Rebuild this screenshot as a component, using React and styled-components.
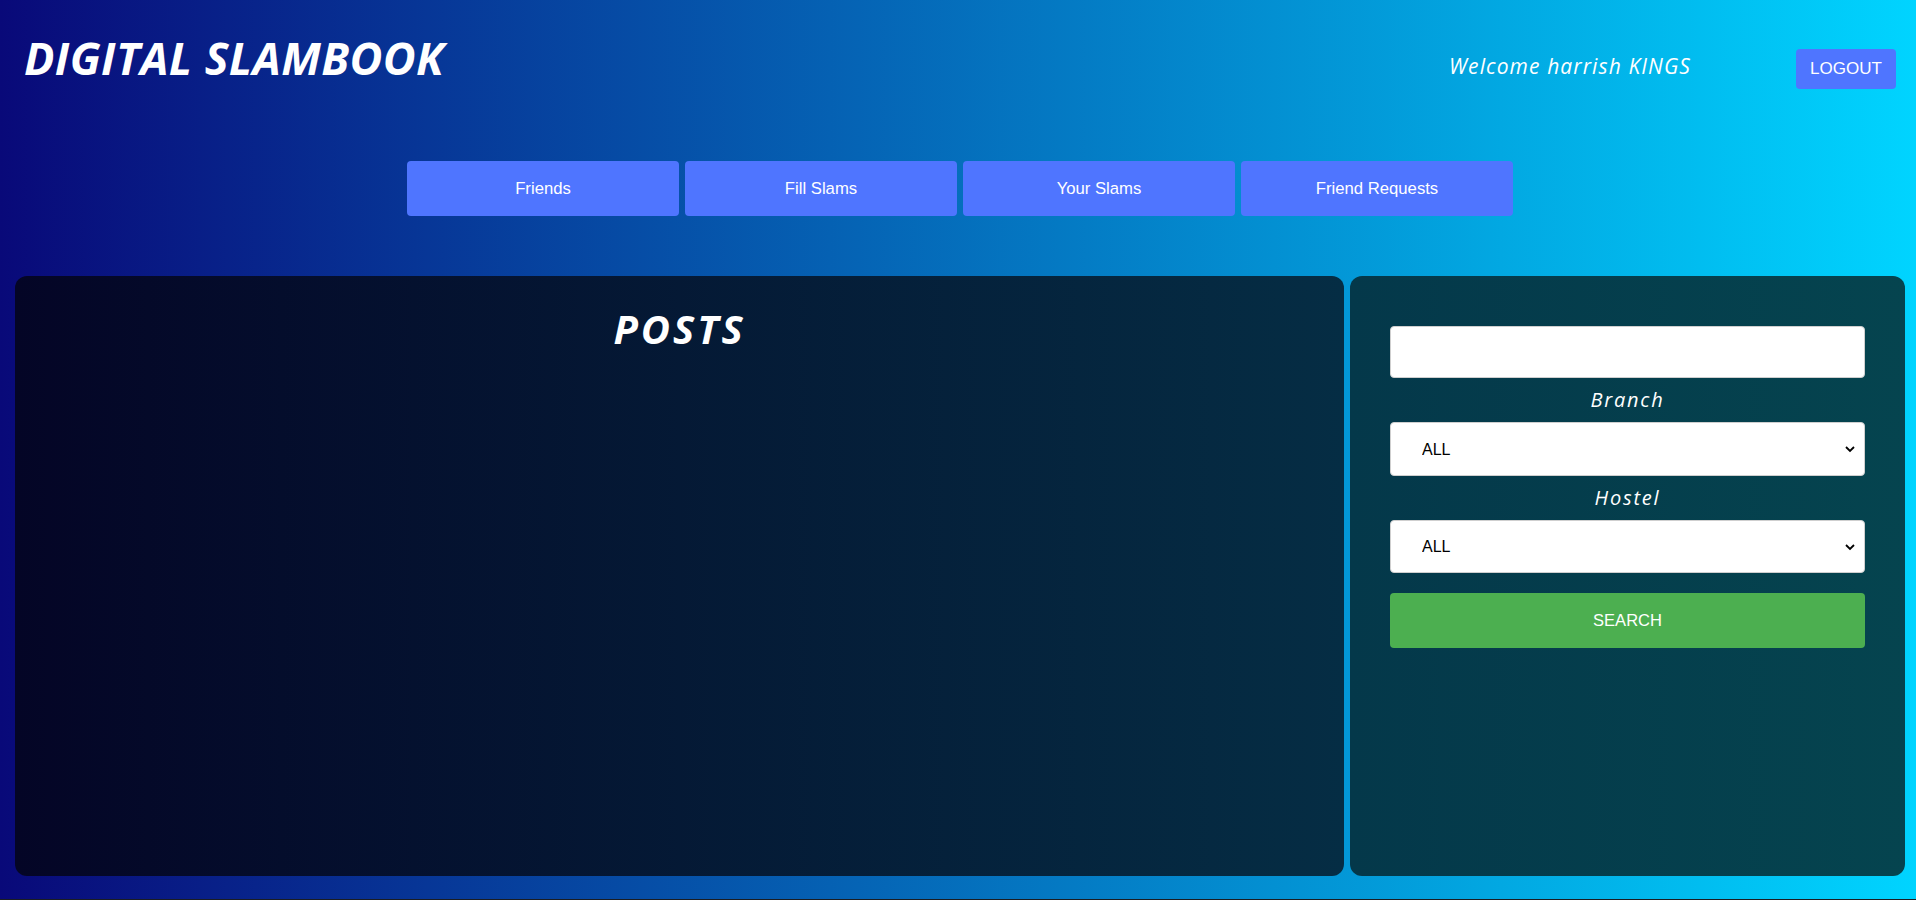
import React from "react";
import styled, { createGlobalStyle } from "styled-components";

const Global = createGlobalStyle`
  html, body { margin: 0; padding: 0; }
  body { font-family: "Liberation Sans", Arial, sans-serif; background: #1b1d22; }
  * { box-sizing: border-box; }
`;

const Page = styled.div`
  background: linear-gradient(90deg, #090979 0%, #00d4ff 100%);
  min-height: 899px;
  display: flex;
  flex-direction: column;
  padding-bottom: 23px;
`;

const Header = styled.header`
  display: flex;
  justify-content: space-between;
  align-items: flex-start;
  padding: 35px 20px 0 24px;
  height: 161px;
`;

const Title = styled.h1`
  margin: 0;
  font-family: "Open Sans", "Noto Sans", sans-serif;
  font-style: italic;
  font-weight: 700;
  font-size: 45px;
  line-height: 45px;
  color: #fff;
  letter-spacing: 0.4px;
`;

const UserBox = styled.div`
  display: flex;
  align-items: center;
  gap: 105px;
  margin-top: 14px;
`;

const Welcome = styled.span`
  font-family: "Open Sans", "Noto Sans", sans-serif;
  font-style: italic;
  font-weight: 500;
  font-size: 21px;
  line-height: 21px;
  letter-spacing: 1.1px;
  color: #fff;
  margin-bottom: 5px;
`;

const BlueButton = styled.button`
  border: none;
  border-radius: 4px;
  background: #4f75ff;
  color: #fff;
  font-family: "Liberation Sans", Arial, sans-serif;
  font-size: ${(p) => p.$fs || 17}px;
  width: ${(p) => p.$w}px;
  height: ${(p) => p.$h}px;
  padding: 0;
  cursor: pointer;
`;

const Nav = styled.nav`
  display: flex;
  justify-content: center;
  gap: 6px;
  padding-left: 4px;
`;

const Main = styled.main`
  display: grid;
  grid-template-columns: 1329px 555px;
  gap: 6px;
  padding-left: 15px;
  margin-top: 60px;
  height: 600px;
`;

const PostsPanel = styled.section`
  border-radius: 12px;
  background: linear-gradient(90deg, #040526 0%, #052d44 100%);
  padding-top: 29px;
  text-align: center;
`;

const PostsTitle = styled.h2`
  margin: 0;
  font-family: "Open Sans", "Noto Sans", sans-serif;
  font-style: italic;
  font-weight: 700;
  font-size: 40px;
  line-height: 48px;
  letter-spacing: 3px;
  color: #fff;
`;

const SearchPanel = styled.aside`
  border-radius: 12px;
  background: linear-gradient(90deg, #04384a 0%, #05444f 100%);
  padding: 50px 40px 0 40px;
  display: flex;
  flex-direction: column;
  gap: 10px;
`;

const TextInput = styled.input`
  height: 52px;
  width: 100%;
  border: 1px solid #cfcfcf;
  border-radius: 4px;
  background: #fff;
  font-size: 16px;
  padding: 0 12px;
  outline: none;
`;

const Label = styled.label`
  display: block;
  text-align: center;
  font-family: "Open Sans", "Noto Sans", sans-serif;
  font-style: italic;
  font-weight: 500;
  font-size: 20px;
  line-height: 24px;
  letter-spacing: 1.8px;
  color: #fff;
`;

const SelectWrap = styled.div`
  position: relative;
  height: ${(p) => p.$h}px;
`;

const Select = styled.select`
  appearance: none;
  -webkit-appearance: none;
  width: 100%;
  height: 100%;
  border: 1px solid #cfcfcf;
  border-radius: 4px;
  background: #fff;
  color: #000;
  font-family: "Liberation Sans", Arial, sans-serif;
  font-size: 16px;
  padding: 0 40px 0 31px;
  outline: none;
`;

const Chevron = styled.svg`
  position: absolute;
  right: 9px;
  top: 50%;
  transform: translateY(-50%);
  width: 12px;
  height: 12px;
  pointer-events: none;
`;

const SearchButton = styled.button`
  margin-top: 10px;
  height: 55px;
  border: none;
  border-radius: 4px;
  background: #4caf50;
  color: #fff;
  font-family: "Liberation Sans", Arial, sans-serif;
  font-size: 16.5px;
  cursor: pointer;
`;

const Footer = styled.footer`
  height: 80px;
  background: #1b1d22;
`;

const Dropdown = ({ h }) => (
  <SelectWrap $h={h}>
    <Select defaultValue="ALL">
      <option>ALL</option>
    </Select>
    <Chevron viewBox="0 0 12 12">
      <path d="M2 4 L6 8 L10 4" fill="none" stroke="#000" strokeWidth="1.8" />
    </Chevron>
  </SelectWrap>
);

export default function App() {
  const tabs = ["Friends", "Fill Slams", "Your Slams", "Friend Requests"];
  return (
    <>
      <Global />
      <Page>
        <Header>
          <Title>DIGITAL SLAMBOOK</Title>
          <UserBox>
            <Welcome>Welcome harrish KINGS</Welcome>
            <BlueButton $w={100} $h={40} $fs={17}>LOGOUT</BlueButton>
          </UserBox>
        </Header>
        <Nav>
          {tabs.map((t) => (
            <BlueButton key={t} $w={272} $h={55} $fs={16.7}>
              {t}
            </BlueButton>
          ))}
        </Nav>
        <Main>
          <PostsPanel>
            <PostsTitle>POSTS</PostsTitle>
          </PostsPanel>
          <SearchPanel>
            <TextInput type="text" />
            <Label>Branch</Label>
            <Dropdown h={54} />
            <Label>Hostel</Label>
            <Dropdown h={53} />
            <SearchButton>SEARCH</SearchButton>
          </SearchPanel>
        </Main>
      </Page>
      <Footer />
    </>
  );
}
